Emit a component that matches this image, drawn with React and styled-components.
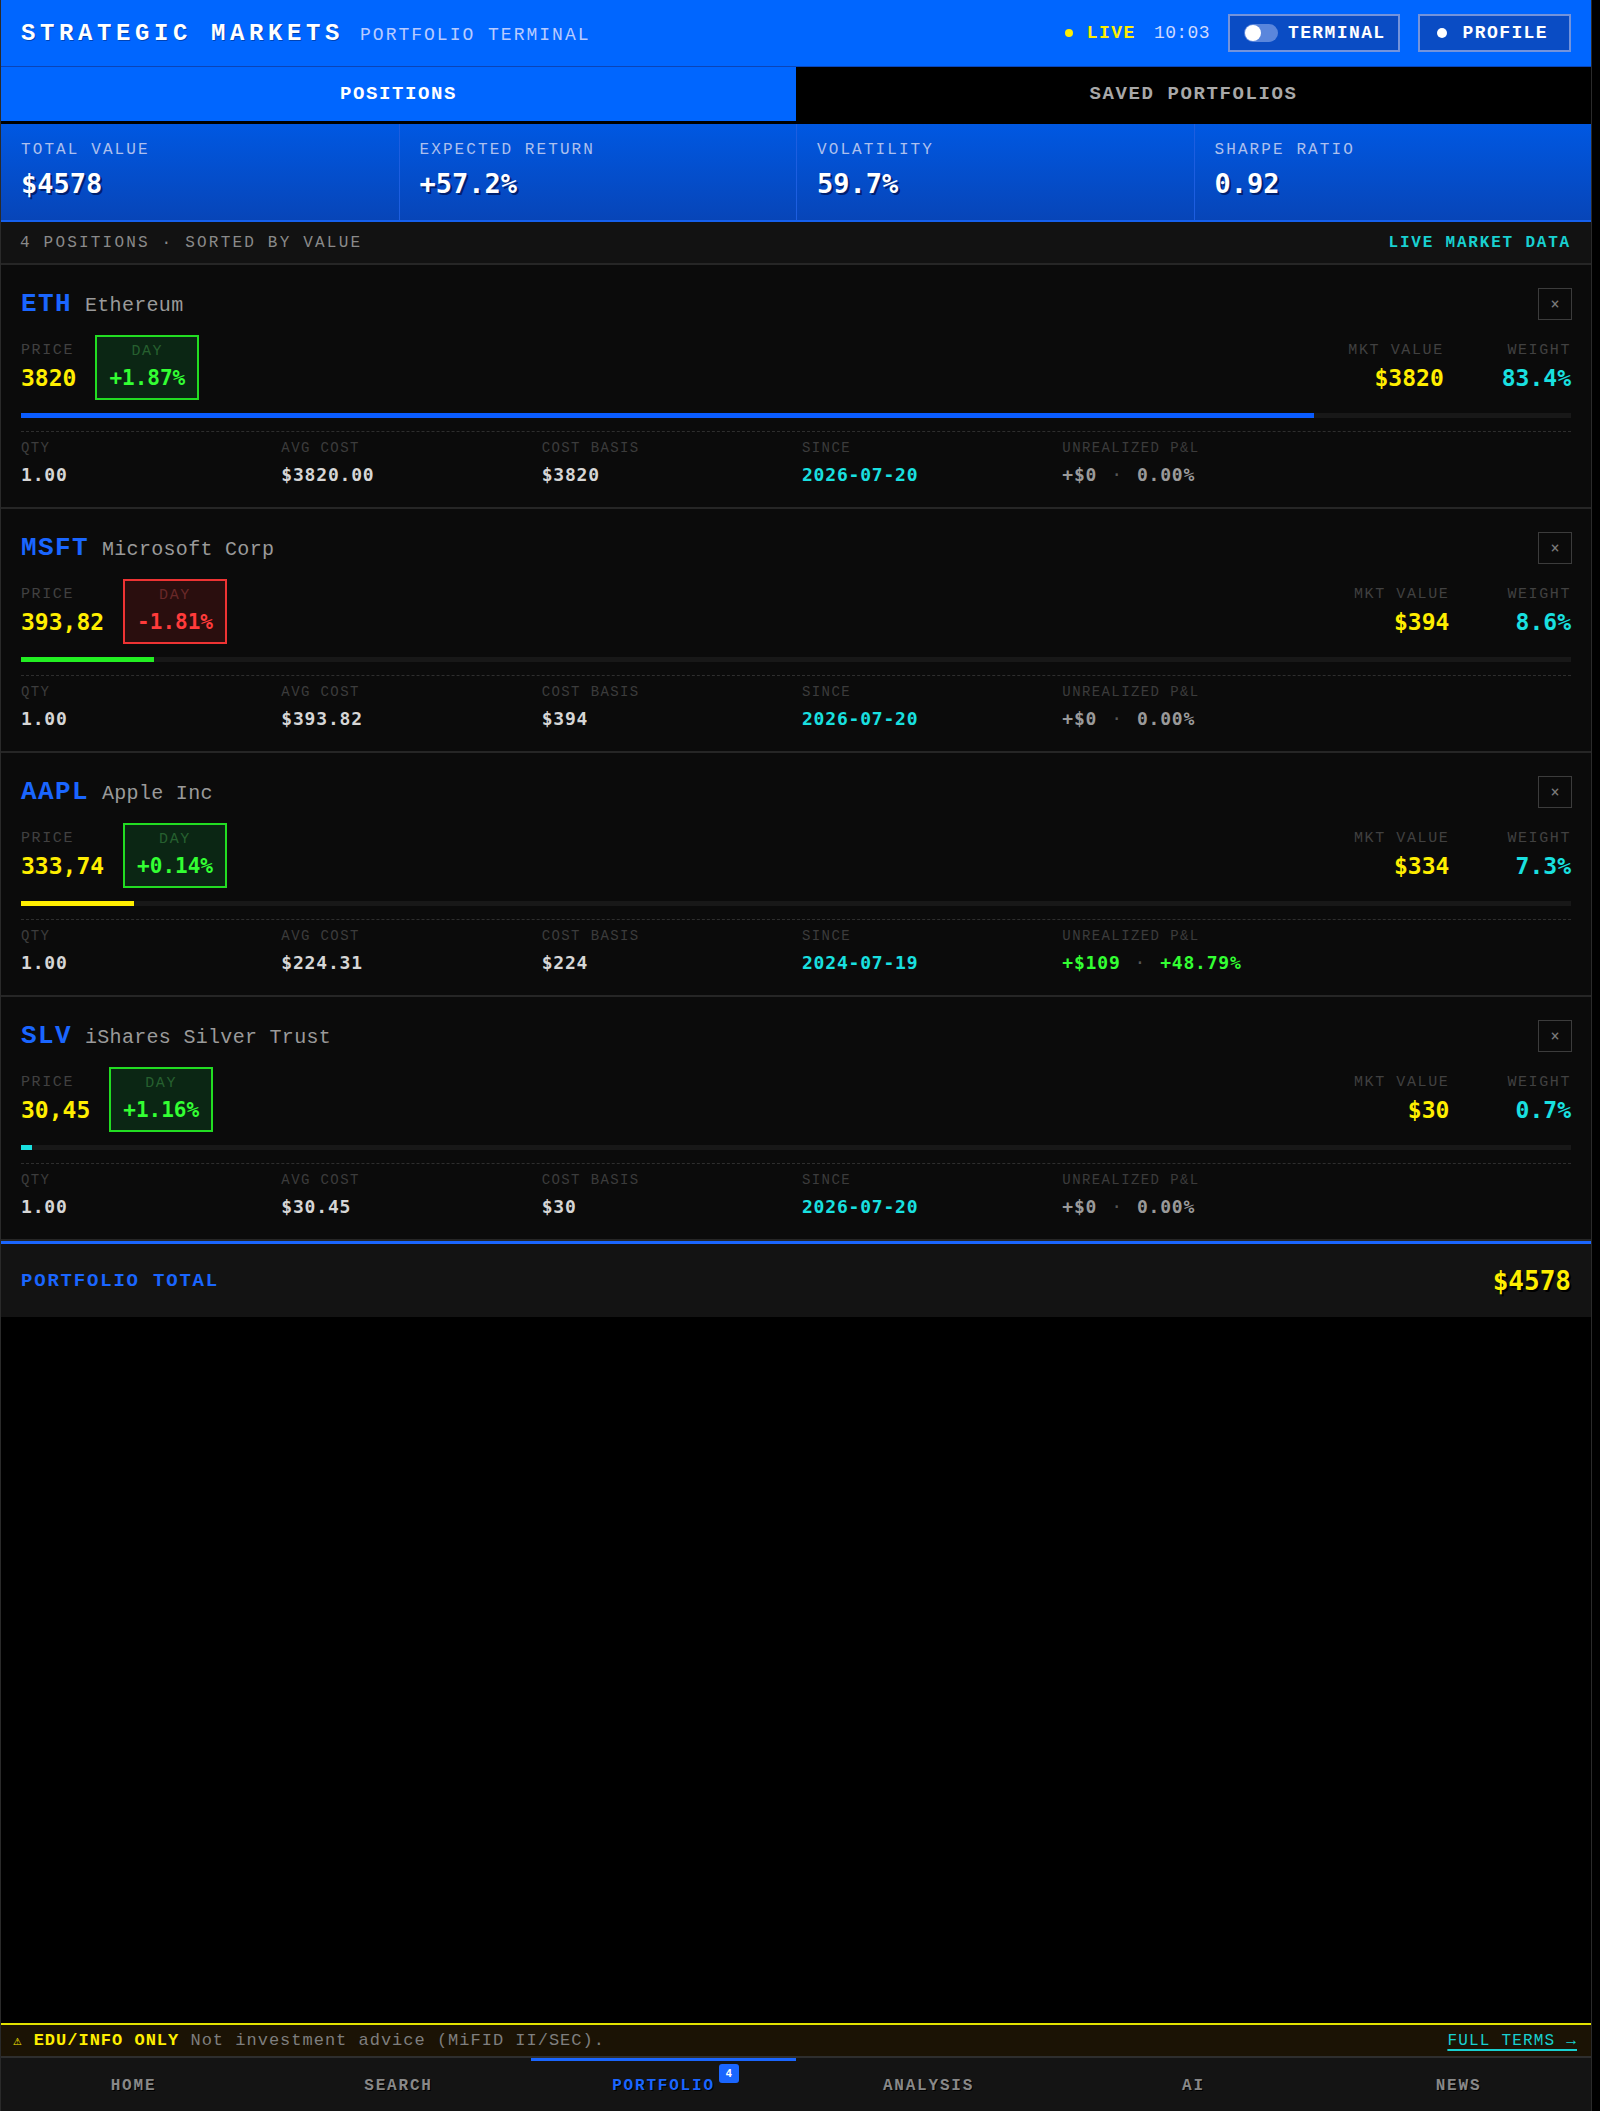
import React from "react";
import styled, { createGlobalStyle } from "styled-components";

const MONO = "'Liberation Mono', 'Courier New', monospace";
const NUM = "'DejaVu Sans Mono', Menlo, monospace";

const BLUE = "#0066ff";
const TICKER_BLUE = "#1a66ff";
const YELLOW = "#ffee00";
const CYAN = "#19e0e0";
const GREEN = "#33ff33";
const RED = "#ff3b3b";

const GlobalStyle = createGlobalStyle`
  html, body {
    margin: 0;
    padding: 0;
    background: #000;
  }
  body {
    font-family: ${MONO};
    color: #ddd;
  }
  * {
    box-sizing: border-box;
  }
`;

const positions = [
  {
    ticker: "ETH",
    name: "Ethereum",
    price: "3820",
    day: "+1.87%",
    up: true,
    mkt: "$3820",
    weight: 83.4,
    bar: "#0a5cff",
    qty: "1.00",
    avg: "$3820.00",
    basis: "$3820",
    since: "2026-07-20",
    pnl: "+$0",
    pnlPct: "0.00%",
    gain: false,
  },
  {
    ticker: "MSFT",
    name: "Microsoft Corp",
    price: "393,82",
    day: "-1.81%",
    up: false,
    mkt: "$394",
    weight: 8.6,
    bar: "#22ee22",
    qty: "1.00",
    avg: "$393.82",
    basis: "$394",
    since: "2026-07-20",
    pnl: "+$0",
    pnlPct: "0.00%",
    gain: false,
  },
  {
    ticker: "AAPL",
    name: "Apple Inc",
    price: "333,74",
    day: "+0.14%",
    up: true,
    mkt: "$334",
    weight: 7.3,
    bar: "#ffee00",
    qty: "1.00",
    avg: "$224.31",
    basis: "$224",
    since: "2024-07-19",
    pnl: "+$109",
    pnlPct: "+48.79%",
    gain: true,
  },
  {
    ticker: "SLV",
    name: "iShares Silver Trust",
    price: "30,45",
    day: "+1.16%",
    up: true,
    mkt: "$30",
    weight: 0.7,
    bar: "#19e0e0",
    qty: "1.00",
    avg: "$30.45",
    basis: "$30",
    since: "2026-07-20",
    pnl: "+$0",
    pnlPct: "0.00%",
    gain: false,
  },
];

const stats = [
  { label: "TOTAL VALUE", value: "$4578" },
  { label: "EXPECTED RETURN", value: "+57.2%" },
  { label: "VOLATILITY", value: "59.7%" },
  { label: "SHARPE RATIO", value: "0.92" },
];

const navItems = ["HOME", "SEARCH", "PORTFOLIO", "ANALYSIS", "AI", "NEWS"];

function PositionCard({ p }) {
  return (
    <Card>
      <CardTop>
        <div>
          <Ticker>{p.ticker}</Ticker>
          <AssetName>{p.name}</AssetName>
        </div>
        <CloseButton>×</CloseButton>
      </CardTop>

      <MetricsRow>
        <MetricGroup>
          <Metric>
            <MetricLabel>PRICE</MetricLabel>
            <MetricValue $color={YELLOW}>{p.price}</MetricValue>
          </Metric>
          <DayBox $up={p.up}>
            <DayLabel $up={p.up}>DAY</DayLabel>
            <DayValue $up={p.up}>{p.day}</DayValue>
          </DayBox>
        </MetricGroup>
        <MetricGroup $right>
          <Metric $right>
            <MetricLabel>MKT VALUE</MetricLabel>
            <MetricValue $color={YELLOW}>{p.mkt}</MetricValue>
          </Metric>
          <Metric $right>
            <MetricLabel>WEIGHT</MetricLabel>
            <MetricValue $color={CYAN}>{p.weight}%</MetricValue>
          </Metric>
        </MetricGroup>
      </MetricsRow>

      <WeightTrack>
        <WeightFill $color={p.bar} style={{ width: `${p.weight}%` }} />
      </WeightTrack>

      <Details>
        <Field>
          <FieldLabel>QTY</FieldLabel>
          <FieldValue>{p.qty}</FieldValue>
        </Field>
        <Field>
          <FieldLabel>AVG COST</FieldLabel>
          <FieldValue>{p.avg}</FieldValue>
        </Field>
        <Field>
          <FieldLabel>COST BASIS</FieldLabel>
          <FieldValue>{p.basis}</FieldValue>
        </Field>
        <Field>
          <FieldLabel>SINCE</FieldLabel>
          <FieldValue $color={CYAN}>{p.since}</FieldValue>
        </Field>
        <Field>
          <FieldLabel>UNREALIZED P&amp;L</FieldLabel>
          <FieldValue $color={p.gain ? GREEN : "#9a9a9a"}>
            {p.pnl}
            <Sep>·</Sep>
            {p.pnlPct}
          </FieldValue>
        </Field>
      </Details>
    </Card>
  );
}

export default function App() {
  return (
    <>
      <GlobalStyle />
      <Shell>
        <Header>
          <Brand>
            <Title>STRATEGIC MARKETS</Title>
            <Subtitle>PORTFOLIO TERMINAL</Subtitle>
          </Brand>
          <HeaderRight>
            <Live>
              <LiveDot />
              LIVE
            </Live>
            <Clock>10:03</Clock>
            <HeaderButton $pad="0 12px 0 14px" $gap="10px">
              <Toggle>
                <Knob />
              </Toggle>
              TERMINAL
            </HeaderButton>
            <HeaderButton $pad="0 21px 0 17px" $gap="16px">
              <ProfileDot />
              PROFILE
            </HeaderButton>
          </HeaderRight>
        </Header>

        <Tabs>
          <Tab $active>POSITIONS</Tab>
          <Tab>SAVED PORTFOLIOS</Tab>
        </Tabs>

        <StatsRow>
          {stats.map((s) => (
            <Stat key={s.label}>
              <StatLabel>{s.label}</StatLabel>
              <StatValue>{s.value}</StatValue>
            </Stat>
          ))}
        </StatsRow>

        <SubBar>
          <span>4 POSITIONS · SORTED BY VALUE</span>
          <LiveData>LIVE MARKET DATA</LiveData>
        </SubBar>

        {positions.map((p) => (
          <PositionCard key={p.ticker} p={p} />
        ))}

        <TotalRow>
          <TotalLabel>PORTFOLIO TOTAL</TotalLabel>
          <TotalValue>$4578</TotalValue>
        </TotalRow>

        <Filler />

        <Disclaimer>
          <div>
            <Warn>
              <WarnIcon>⚠</WarnIcon> EDU/INFO ONLY
            </Warn>{" "}
            Not investment advice (MiFID II/SEC).
          </div>
          <TermsLink href="#">FULL TERMS →</TermsLink>
        </Disclaimer>

        <BottomNav>
          {navItems.map((item) => (
            <NavItem key={item} $active={item === "PORTFOLIO"}>
              <NavLabel>
                {item}
                {item === "PORTFOLIO" && <Badge>4</Badge>}
              </NavLabel>
            </NavItem>
          ))}
        </BottomNav>
      </Shell>
    </>
  );
}

const Shell = styled.div`
  width: 1592px;
  height: 100vh;
  display: flex;
  flex-direction: column;
  background: #000;
  border-left: 1px solid #2a2a2a;
  border-right: 1px solid #2a2a2a;
  overflow: hidden;
`;

const Header = styled.header`
  height: 67px;
  flex-shrink: 0;
  background: ${BLUE};
  border-bottom: 1px solid #0a45b8;
  display: flex;
  align-items: center;
  justify-content: space-between;
  padding: 0 20px;
`;

const Brand = styled.div`
  display: flex;
  align-items: baseline;
  gap: 16px;
`;

const Title = styled.h1`
  margin: 0;
  font-family: ${MONO};
  font-size: 24px;
  font-weight: 700;
  letter-spacing: 4.6px;
  color: #fff;
  text-shadow: 1px 1px 0 rgba(0, 20, 80, 0.45);
`;

const Subtitle = styled.span`
  font-size: 18px;
  letter-spacing: 2px;
  color: #b8cbff;
`;

const HeaderRight = styled.div`
  display: flex;
  align-items: center;
  gap: 18px;
`;

const Live = styled.span`
  display: flex;
  align-items: center;
  gap: 14px;
  font-size: 18px;
  font-weight: 700;
  letter-spacing: 1.5px;
  color: ${YELLOW};
`;

const LiveDot = styled.span`
  width: 8px;
  height: 8px;
  border-radius: 50%;
  background: ${YELLOW};
`;

const Clock = styled.span`
  font-size: 18px;
  letter-spacing: 0.4px;
  color: #cdd9ff;
`;

const HeaderButton = styled.button`
  height: 38px;
  display: flex;
  align-items: center;
  gap: ${(p) => p.$gap};
  padding: ${(p) => p.$pad};
  background: #0a4cc4;
  border: 2px solid #7393dc;
  color: #fff;
  font-family: ${MONO};
  font-size: 18px;
  font-weight: 700;
  letter-spacing: 1.4px;
  cursor: pointer;
`;

const Toggle = styled.span`
  width: 34px;
  height: 18px;
  border-radius: 9px;
  background: #5a86dc;
  display: flex;
  align-items: center;
  padding: 0 1px;
`;

const Knob = styled.span`
  width: 16px;
  height: 16px;
  border-radius: 50%;
  background: #fff;
`;

const ProfileDot = styled.span`
  width: 10px;
  height: 10px;
  border-radius: 50%;
  background: #fff;
`;

const Tabs = styled.nav`
  height: 57px;
  flex-shrink: 0;
  display: grid;
  grid-template-columns: 1fr 1fr;
  border-bottom: 3px solid #000;
`;

const Tab = styled.div`
  display: flex;
  align-items: center;
  justify-content: center;
  font-size: 19px;
  font-weight: 700;
  letter-spacing: 1.6px;
  background: ${(p) => (p.$active ? BLUE : "#000")};
  color: ${(p) => (p.$active ? "#fff" : "#a8a8a8")};
`;

const StatsRow = styled.section`
  height: 98px;
  flex-shrink: 0;
  display: grid;
  grid-template-columns: repeat(4, 1fr);
  background: linear-gradient(180deg, #0058e2 0%, #0745b8 100%);
  border-bottom: 2px solid #1560ee;
`;

const Stat = styled.div`
  padding: 18px 20px;
  border-left: 1px solid #1d5ee0;
  &:first-child {
    border-left: none;
  }
`;

const StatLabel = styled.div`
  font-size: 16px;
  line-height: 16px;
  letter-spacing: 2.1px;
  color: #adc0ee;
`;

const StatValue = styled.div`
  margin-top: 10px;
  font-family: ${NUM};
  font-size: 27px;
  line-height: 32px;
  font-weight: 700;
  color: #fff;
  text-shadow: 2px 2px 0 #002070;
`;

const SubBar = styled.div`
  height: 43px;
  flex-shrink: 0;
  display: flex;
  align-items: center;
  justify-content: space-between;
  padding: 0 20px 0 19px;
  background: #121212;
  border-bottom: 2px solid #262626;
  font-size: 16px;
  letter-spacing: 2.2px;
  color: #8a8a8a;
`;

const LiveData = styled.span`
  color: #19d0d0;
  font-weight: 700;
  letter-spacing: 1.8px;
`;

const Card = styled.article`
  flex-shrink: 0;
  background: #0b0b0b;
  border-bottom: 2px solid #262626;
  padding: 22px 20px 21px;
`;

const CardTop = styled.div`
  height: 34px;
  display: flex;
  align-items: center;
  justify-content: space-between;
`;

const Ticker = styled.span`
  font-size: 26px;
  font-weight: 700;
  letter-spacing: 1.4px;
  color: ${TICKER_BLUE};
`;

const AssetName = styled.span`
  margin-left: 13px;
  font-size: 20px;
  letter-spacing: 0.3px;
  color: #9a9a9a;
`;

const CloseButton = styled.button`
  width: 34px;
  height: 32px;
  margin-right: -1px;
  background: transparent;
  border: 1px solid #3c3c3c;
  color: #7a7a7a;
  font-family: ${NUM};
  font-size: 15px;
  line-height: 1;
  padding: 0;
  cursor: pointer;
`;

const MetricsRow = styled.div`
  margin-top: 14px;
  height: 65px;
  display: flex;
  align-items: center;
  justify-content: space-between;
`;

const MetricGroup = styled.div`
  display: flex;
  align-items: center;
  gap: ${(p) => (p.$right ? "58px" : "19px")};
`;

const Metric = styled.div`
  text-align: ${(p) => (p.$right ? "right" : "left")};
`;

const MetricLabel = styled.div`
  font-size: 15px;
  line-height: 16px;
  letter-spacing: 1.6px;
  color: #414141;
`;

const MetricValue = styled.div`
  margin-top: 4px;
  font-family: ${NUM};
  font-size: 23px;
  line-height: 30px;
  font-weight: 700;
  color: ${(p) => p.$color};
`;

const DayBox = styled.div`
  height: 65px;
  padding: 7px 12px 0;
  text-align: center;
  border: 2px solid ${(p) => (p.$up ? "#22dd22" : "#ee3333")};
  background: ${(p) => (p.$up ? "#0b2614" : "#2a0e0e")};
`;

const DayLabel = styled.div`
  font-size: 15px;
  line-height: 16px;
  letter-spacing: 1.6px;
  color: ${(p) => (p.$up ? "#26602f" : "#682828")};
`;

const DayValue = styled.div`
  margin-top: 3px;
  font-family: ${NUM};
  font-size: 21px;
  line-height: 30px;
  font-weight: 700;
  color: ${(p) => (p.$up ? GREEN : RED)};
`;

const WeightTrack = styled.div`
  margin-top: 13px;
  height: 5px;
  background: #181818;
`;

const WeightFill = styled.div`
  height: 100%;
  background: ${(p) => p.$color};
`;

const Details = styled.div`
  margin-top: 13px;
  padding-top: 8px;
  border-top: 1px dashed #2e2e2e;
  display: grid;
  grid-template-columns: repeat(6, 1fr);
  column-gap: 12px;
`;

const Field = styled.div``;

const FieldLabel = styled.div`
  font-size: 14px;
  line-height: 16px;
  letter-spacing: 1.4px;
  color: #3c3c3c;
`;

const FieldValue = styled.div`
  margin-top: 8px;
  font-family: ${NUM};
  font-size: 18px;
  line-height: 22px;
  font-weight: 700;
  letter-spacing: 0.8px;
  color: ${(p) => p.$color || "#d6d6d6"};
`;

const Sep = styled.span`
  margin: 0 14px;
  color: #555;
  font-weight: 400;
`;

const TotalRow = styled.div`
  height: 76px;
  flex-shrink: 0;
  display: flex;
  align-items: center;
  justify-content: space-between;
  padding: 0 20px;
  background: #131313;
  border-top: 3px solid ${TICKER_BLUE};
`;

const TotalLabel = styled.span`
  font-size: 19px;
  font-weight: 700;
  letter-spacing: 1.8px;
  color: ${TICKER_BLUE};
`;

const TotalValue = styled.span`
  font-family: ${NUM};
  font-size: 26px;
  font-weight: 700;
  color: ${YELLOW};
  text-shadow: 2px 2px 0 #000;
`;

const Filler = styled.div`
  flex: 1;
  background: #000;
`;

const Disclaimer = styled.div`
  height: 33px;
  flex-shrink: 0;
  display: flex;
  align-items: center;
  justify-content: space-between;
  padding: 0 14px 0 12px;
  background: #1b1305;
  border-top: 2px solid #e2e200;
  font-size: 17px;
  letter-spacing: 1px;
  color: #7e7e7e;
`;

const Warn = styled.span`
  color: ${YELLOW};
  font-weight: 700;
`;

const WarnIcon = styled.span`
  font-family: ${NUM};
  font-size: 14px;
`;

const TermsLink = styled.a`
  font-size: 16px;
  letter-spacing: 1.2px;
  color: #19d0d0;
  text-decoration: underline;
  text-decoration-thickness: 2px;
  text-underline-offset: 4px;
`;

const BottomNav = styled.nav`
  height: 55px;
  flex-shrink: 0;
  display: flex;
  background: #141414;
  border-top: 2px solid #2e2e2e;
`;

const NavItem = styled.div`
  flex: 1;
  display: flex;
  align-items: center;
  justify-content: center;
  border-top: 3px solid ${(p) => (p.$active ? TICKER_BLUE : "transparent")};
  color: ${(p) => (p.$active ? TICKER_BLUE : "#888")};
`;

const NavLabel = styled.span`
  position: relative;
  font-size: 16px;
  line-height: 20px;
  font-weight: 700;
  letter-spacing: 1.8px;
  text-shadow: 1px 1px 0 #000;
`;

const Badge = styled.span`
  position: absolute;
  left: calc(100% + 4px);
  top: -12px;
  min-width: 20px;
  height: 19px;
  border-radius: 3px;
  background: ${TICKER_BLUE};
  color: #fff;
  font-family: ${NUM};
  font-size: 11px;
  font-weight: 700;
  line-height: 19px;
  letter-spacing: 0;
  text-align: center;
  text-shadow: none;
`;
